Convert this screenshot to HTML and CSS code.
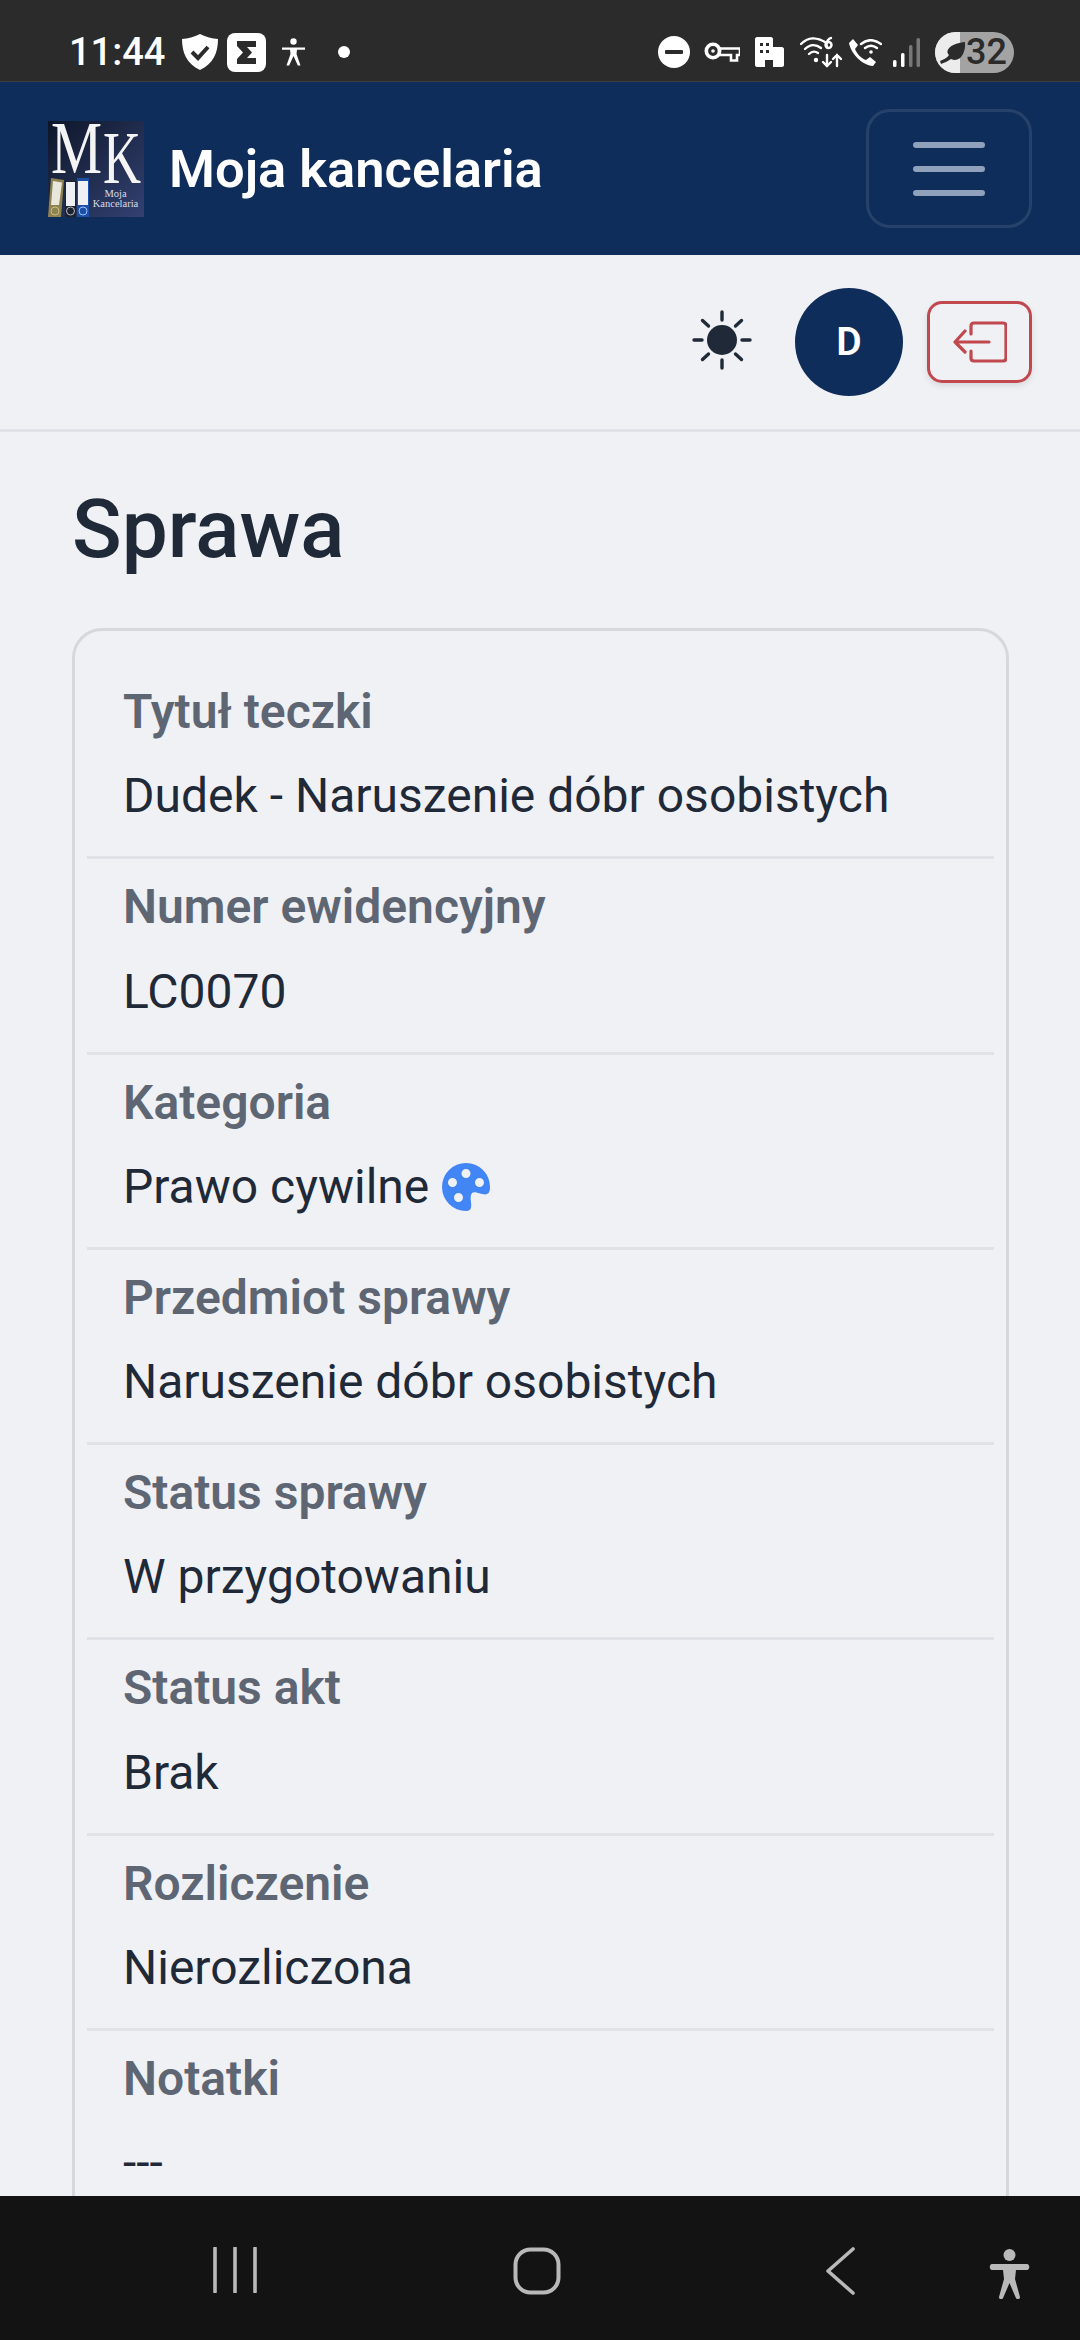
FILE: index.html
```html
<!DOCTYPE html>
<html lang="pl">
<head>
<meta charset="utf-8">
<title>Moja kancelaria</title>
<link rel="stylesheet" href="styles.css">
</head>
<body>
<div class="phone">
  <div class="statusbar">
    <span class="time">11:44</span>
    <svg class="si w38 g19" viewBox="0 0 38 38"><path d="M19 1C25 4 31 5.500 37 6C37 20 32 31 19 37C6 31 1 20 1 6C7 5.500 13 4 19 1Z" fill="#fff"/><path d="M11 19L17 25L27 14" fill="none" stroke="#2b2b2b" stroke-width="4"/></svg>
    <svg class="si w39 g8" viewBox="0 0 39 39"><rect width="39" height="39" rx="8" fill="#fff"/><path d="M10 8H29V14H20L25 19.500L20 25H29V31H10V26L16 19.500L10 13Z" fill="#2b2b2b"/></svg>
    <svg class="si w23 g16" viewBox="0 0 23 28"><circle cx="11.500" cy="3.500" r="3.200" fill="#fff"/><path d="M0 9.500H23V11.800H15L14.500 16L18.500 27.500H15.800L11.500 18L7.200 27.500H4.500L8.500 16L8 11.800H0Z" fill="#fff"/></svg>
    <span class="dot"></span>
    <span class="spacer"></span>
    <svg class="si w32" viewBox="0 0 32 32"><circle cx="16" cy="16" r="16" fill="#fff"/><rect x="7" y="14" width="18" height="4" rx="1" fill="#2b2b2b"/></svg>
    <svg class="si w36 g14" viewBox="0 0 36 20"><circle cx="9" cy="9" r="6.700" fill="none" stroke="#fff" stroke-width="3.600"/><circle cx="9" cy="9" r="1.800" fill="#fff"/><path d="M15 6.500H36V13H33V18.500H27V13H15Z" fill="none" stroke="#fff" stroke-width="2.600"/></svg>
    <svg class="si w29 g15" viewBox="0 0 29 30"><path d="M2 0H16C17 0 18 1 18 2V10H27C28 10 29 11 29 12V28C29 29 28 30 27 30H18V23H10V30H2C1 30 0 29 0 28V2C0 1 1 0 2 0Z" fill="#fff"/><g fill="#2b2b2b"><rect x="5" y="6" width="3" height="3"/><rect x="11" y="6" width="3" height="3"/><rect x="5" y="13" width="3" height="3"/><rect x="11" y="13" width="3" height="3"/></g></svg>
    <svg class="si w43 g16" viewBox="0 0 43 32"><g fill="none" stroke="#fff" stroke-width="2.400" stroke-linecap="round"><path d="M1 8C8 1 17 1 25 6"/><path d="M5 13C10 8 16 8 21 12"/><path d="M9 18C12 15 15 15 18 17"/><path d="M27 11C25 5 30 2 31 2"/><circle cx="28.500" cy="9" r="3"/><path d="M27 19V30M23 26L27 30L31 26"/><path d="M37 30V19M33 23L37 19L41 23"/></g><circle cx="16" cy="24" r="2.200" fill="#fff"/></svg>
    <svg class="si w33 g6" viewBox="0 0 33 27"><path d="M4 0L9 6L6 10C8 15 12 19 17 21L21 18L27 23L24 27C13 26 2 15 0 4Z" fill="#fff"/><g fill="none" stroke="#fff" stroke-width="2.400" stroke-linecap="round"><path d="M12 5C18 0 25 0 32 5"/><path d="M16 9C20 6 24 6 28 9"/></g><circle cx="22" cy="13" r="1.800" fill="#fff"/></svg>
    <svg class="si w27 g11" viewBox="0 0 27 29"><rect x="0" y="22" width="3.500" height="7" rx="1.500" fill="#fff"/><rect x="8" y="15" width="3.500" height="14" rx="1.500" fill="#fff"/><rect x="16" y="7" width="3.500" height="22" rx="1.500" fill="#777"/><rect x="23.500" y="0" width="3.500" height="29" rx="1.500" fill="#777"/></svg>
    <div class="battery">
      <span class="level"></span>
      <svg class="leaf" viewBox="0 0 26 26"><path d="M0 22C4 20 7 19 9 16C4 11 12 4 25 3C26 14 20 24 11 20C8 22 4 24 1 25Z" fill="#2b2b2b"/></svg>
      <span class="pct">32</span>
    </div>
  </div>

  <header class="navbar">
    <svg class="logo" viewBox="0 0 96 96">
      <defs><linearGradient id="lg" x1="0" y1="0" x2="1" y2="1"><stop offset="0" stop-color="#0d1628"/><stop offset="1" stop-color="#334172"/></linearGradient></defs>
      <rect width="96" height="96" fill="url(#lg)"/>
      <text x="3" y="52" class="logo-big" textLength="51" lengthAdjust="spacingAndGlyphs">M</text>
      <text x="55" y="62" class="logo-big" textLength="38" lengthAdjust="spacingAndGlyphs">K</text>
      <path d="M3 57L16 59L13 96H0Z" fill="#8d8251"/><path d="M5 60L14 61.500L11 84H3Z" fill="#e9e6dc"/><circle cx="7" cy="90" r="4" fill="none" stroke="#c9bd7c"/>
      <rect x="17" y="60" width="11" height="36" fill="#1c2230"/><rect x="18" y="61" width="9" height="24" fill="#eef0f4"/><circle cx="22.500" cy="90" r="4" fill="none" stroke="#bbb"/>
      <rect x="29" y="57" width="12" height="39" fill="#1c4fa8"/><rect x="30" y="60" width="10" height="24" fill="#eef0f4"/><circle cx="35" cy="90" r="4" fill="none" stroke="#9cc0ff"/>
      <text x="67.500" y="76" class="logo-t">Moja</text>
      <text x="67.500" y="86" class="logo-t">Kancelaria</text>
    </svg>
    <span class="brand">Moja kancelaria</span>
    <span class="toggler"><span class="bar"></span><span class="bar"></span><span class="bar"></span></span>
  </header>

  <div class="actions">
    <svg class="sun" viewBox="0 0 60 60"><circle cx="30" cy="30" r="15" fill="#1f2937"/><g stroke="#1f2937" stroke-width="3.400" stroke-linecap="round"><path d="M30 2V10M30 50V58M2 30H10M50 30H58M10.500 10.500L16.500 16M43.500 44L49.500 49.500M10.500 49.500L16.500 44M43.500 16L49.500 10.500"/></g></svg>
    <div class="avatar">D</div>
    <div class="logout">
      <svg class="logout-ic" viewBox="0 0 54 42"><g fill="none" stroke="#c0484e" stroke-width="3.200" stroke-linecap="round" stroke-linejoin="round"><path d="M18 13V5C18 3 19 2 21 2H50C52 2 53 3 53 5V37C53 39 52 40 50 40H21C19 40 18 39 18 37V30"/><path d="M36 21H2M12 10L2 21L12 31"/></g></svg>
    </div>
  </div>

  <main class="content">
    <h1 class="title">Sprawa</h1>
    <section class="card">
      <div class="row"><div class="label">Tytuł teczki</div><div class="value">Dudek - Naruszenie dóbr osobistych</div></div>
      <div class="row"><div class="label">Numer ewidencyjny</div><div class="value">LC0070</div></div>
      <div class="row"><div class="label">Kategoria</div><div class="value">Prawo cywilne <svg class="palette" viewBox="0 0 16 16"><path fill="#4285f4" d="M12.433 10.07C14.133 10.585 16 11.15 16 8a8 8 0 1 0-8 8c1.996 0 1.826-1.504 1.649-3.08-.124-1.101-.252-2.237.351-2.92.465-.527 1.42-.237 2.433.07zM8 5a1.500 1.500 0 1 1 0-3 1.500 1.500 0 0 1 0 3zm4.500 3a1.500 1.500 0 1 1 0-3 1.500 1.500 0 0 1 0 3zM5 6.500a1.500 1.500 0 1 1-3 0 1.500 1.500 0 0 1 3 0zm.5 6.500a1.500 1.500 0 1 1 0-3 1.500 1.500 0 0 1 0 3z"/></svg></div></div>
      <div class="row"><div class="label">Przedmiot sprawy</div><div class="value">Naruszenie dóbr osobistych</div></div>
      <div class="row"><div class="label">Status sprawy</div><div class="value">W przygotowaniu</div></div>
      <div class="row"><div class="label">Status akt</div><div class="value">Brak</div></div>
      <div class="row"><div class="label">Rozliczenie</div><div class="value">Nierozliczona</div></div>
      <div class="row"><div class="label">Notatki</div><div class="value">---</div></div>
    </section>
  </main>

  <nav class="sysnav">
    <svg class="nav-recents" viewBox="0 0 44 46"><path d="M2 1V45M22 1V45M42 1V45" stroke="#b9b9b9" stroke-width="3.600" stroke-linecap="round"/></svg>
    <svg class="nav-home" viewBox="0 0 48 48"><rect x="2.500" y="2.500" width="43" height="43" rx="15" fill="none" stroke="#b9b9b9" stroke-width="4"/></svg>
    <svg class="nav-back" viewBox="0 0 30 48"><path d="M28 2L3 24L28 46" fill="none" stroke="#b9b9b9" stroke-width="3.600" stroke-linecap="round" stroke-linejoin="round"/></svg>
    <svg class="nav-a11y" viewBox="0 0 41 50"><circle cx="20.500" cy="6" r="6" fill="#b9b9b9"/><path d="M3 15H38C41 15 41 21 38 21H27L26 30L31 48C31 51 27 51 26.500 48L20.500 34L14.500 48C14 51 10 51 10 48L15 30L14 21H3C0 21 0 15 3 15Z" fill="#b9b9b9"/></svg>
  </nav>
</div>
</body>
</html>
```
FILE: styles.css
```css
* { box-sizing: border-box; }
html, body { margin: 0; padding: 0; }
body { font-family: Roboto, "Liberation Sans", sans-serif; background: #eff1f5; color: #1f2937; }
.phone { width: 1080px; height: 2340px; display: flex; flex-direction: column; overflow: hidden; }

.statusbar { height: 82px; flex: none; background: #2b2b2b; border-bottom: 1px solid #3c3d3f; display: flex; align-items: center; padding: 23px 66px 0 69px; color: #fff; }
.time { font-size: 38px; font-weight: 500; line-height: 46px; width: 93px; white-space: nowrap; }
.si { flex: none; display: block; }
.w23 { width: 23px; } .w27 { width: 27px; } .w29 { width: 29px; } .w32 { width: 32px; } .w33 { width: 33px; }
.w36 { width: 36px; } .w38 { width: 38px; } .w39 { width: 39px; } .w43 { width: 43px; }
.g6 { margin-left: 6px; } .g8 { margin-left: 8px; } .g11 { margin-left: 11px; } .g14 { margin-left: 14px; }
.g15 { margin-left: 15px; } .g16 { margin-left: 16px; } .g19 { margin-left: 19px; }
.dot { width: 12px; height: 12px; border-radius: 50%; background: #fff; margin-left: 33px; }
.spacer { flex: 1; }
.battery { width: 79px; height: 41px; margin-left: 15px; border-radius: 21px; background: #a3a3a3; overflow: hidden; display: flex; align-items: center; position: relative; color: #2b2b2b; }
.level { position: absolute; left: 0; top: 0; bottom: 0; width: 25px; background: #ececec; }
.leaf { position: relative; width: 26px; height: 26px; margin-left: 5px; flex: none; }
.pct { position: relative; font-size: 36px; font-weight: 500; line-height: 40px; margin-left: 0; font-family: Roboto, sans-serif; }

.navbar { height: 173px; flex: none; background: #0f2d5a; display: flex; align-items: center; padding: 0 48px 0 48px; }
.logo { width: 96px; height: 96px; flex: none; overflow: visible; }
.logo-big { font-family: "Liberation Serif", serif; font-size: 74px; fill: #f4f4f4; }
.logo-t { font-family: "Liberation Serif", serif; font-size: 10.500px; fill: #d9dcea; text-anchor: middle; }
.brand { font-size: 52.500px; font-weight: 600; color: #fff; margin-left: 25px; flex: 1; white-space: nowrap; }
.toggler { width: 166px; height: 119px; border: 3px solid rgba(255,255,255,.1); border-radius: 24px; display: flex; flex-direction: column; align-items: center; justify-content: center; gap: 18px; }
.bar { width: 72px; height: 6px; border-radius: 3px; background: #8fa1bb; }

.actions { height: 177px; flex: none; border-bottom: 3px solid #e0e2e7; display: flex; align-items: center; justify-content: flex-end; padding: 0 48px 0 0; }
.sun { width: 60px; height: 60px; flex: none; margin-bottom: 4px; }
.avatar { width: 108px; height: 108px; margin-left: 43px; border-radius: 50%; background: #0f2d5a; color: #fff; font-size: 39px; font-weight: 600; display: flex; align-items: center; justify-content: center; }
.logout { width: 105px; height: 82px; margin-left: 24px; border: 3px solid #c0484e; border-radius: 15px; box-shadow: 0 3px 6px rgba(0,0,0,.1); display: flex; align-items: center; justify-content: center; }
.logout-ic { width: 54px; height: 42px; }

.content { flex: 1; min-height: 0; overflow: hidden; padding: 0 71px 0 72px; }
.title { margin: 0; font-size: 82px; font-weight: 500; line-height: 100px; color: #1f2937; padding-top: 47px; margin-bottom: 49px; }
.card { border: 3px solid #d5d8dd; border-radius: 30px; padding: 33px 12px 0; }
.row { padding: 12px 36px 24px; border-bottom: 3px solid #e0e2e7; }
.row:last-child { border-bottom: 0; }
.label { font-size: 48px; font-weight: 600; line-height: 72px; color: #5e6673; margin-bottom: 12.300px; }
.value { font-size: 48px; line-height: 72px; color: #1f2937; display: flex; align-items: center; gap: 13px; }
.palette { width: 48px; height: 48px; flex: none; }

.sysnav { height: 144px; flex: none; background: #131313; position: relative; }
.sysnav svg { position: absolute; }
.nav-recents { left: 213px; top: 51px; width: 44px; height: 46px; }
.nav-home { left: 513px; top: 51px; width: 48px; height: 48px; }
.nav-back { left: 825px; top: 51px; width: 30px; height: 48px; }
.nav-a11y { left: 989px; top: 53px; width: 41px; height: 50px; }
```
